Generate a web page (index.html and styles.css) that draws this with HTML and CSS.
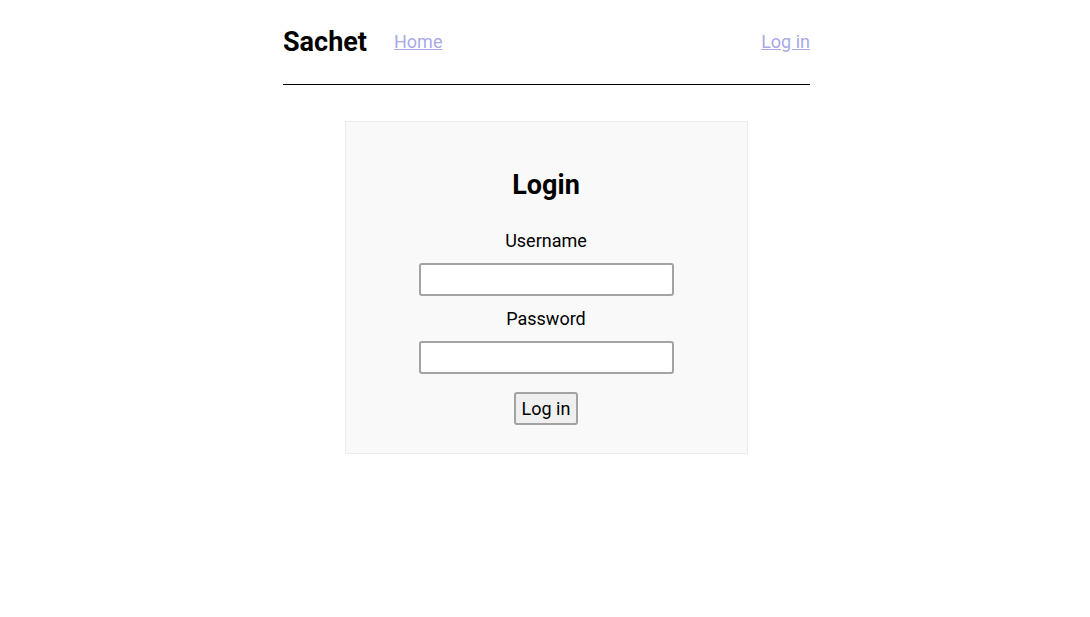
FILE: index.html
```html
<!DOCTYPE html>
<html lang="en">
<head>
<meta charset="utf-8">
<title>Sachet</title>
<link rel="stylesheet" href="styles.css">
</head>
<body>
<div class="page">
  <header class="site-header">
    <div class="nav-left">
      <span class="brand">Sachet</span>
      <a class="nav-link" href="#">Home</a>
    </div>
    <a class="nav-link" href="#">Log in</a>
  </header>
  <main class="main">
    <form class="login-card">
      <h1 class="login-title">Login</h1>
      <label class="field-label" for="username">Username</label>
      <input class="field-input" id="username" type="text">
      <label class="field-label" for="password">Password</label>
      <input class="field-input" id="password" type="password">
      <button class="submit-btn" type="button">Log in</button>
    </form>
  </main>
</div>
</body>
</html>
```
FILE: styles.css
```css
html, body {
  margin: 0;
  padding: 0;
  background: #ffffff;
}
body {
  font-family: Roboto, "Liberation Sans", sans-serif;
  color: #000;
}
.page {
  width: 527px;
  margin: 0 auto;
  padding-left: 3px;
}
.site-header {
  display: flex;
  align-items: center;
  justify-content: space-between;
  height: 85px;
  padding-bottom: 2px;
  border-bottom: 1px solid #000;
  box-sizing: border-box;
}
.nav-left {
  display: flex;
  align-items: center;
  gap: 27px;
}
.brand {
  font-size: 27px;
  font-weight: 700;
  padding-top: 2px;
}
.nav-link {
  font-size: 18px;
  color: #a9a9e6;
  text-decoration: underline;
}
.main {
  display: flex;
  justify-content: center;
  padding-top: 36px;
  padding-right: 1px;
}
.login-card {
  width: 403px;
  height: 333px;
  box-sizing: border-box;
  background: #f9f9f9;
  border: 1px solid #ececec;
  display: flex;
  flex-direction: column;
  align-items: center;
  padding-top: 45px;
}
.login-title {
  margin: 0;
  font-size: 27px;
  font-weight: 700;
  line-height: 36px;
}
.field-label {
  font-size: 18px;
  line-height: 21px;
}
.login-title + .field-label {
  margin-top: 27px;
}
.field-input {
  margin-top: 12px;
  width: 255px;
  height: 33px;
  box-sizing: border-box;
  border: 2px solid #a3a3a3;
  border-radius: 3px;
  background: #fff;
  font-family: inherit;
  font-size: 16px;
}
.field-input + .field-label {
  margin-top: 12px;
}
.submit-btn {
  margin-top: 18px;
  height: 33px;
  width: 64px;
  box-sizing: border-box;
  border: 2px solid #a3a3a3;
  border-radius: 3px;
  background: #efefef;
  font-family: inherit;
  font-size: 18px;
  color: #000;
  padding: 0;
}
```
